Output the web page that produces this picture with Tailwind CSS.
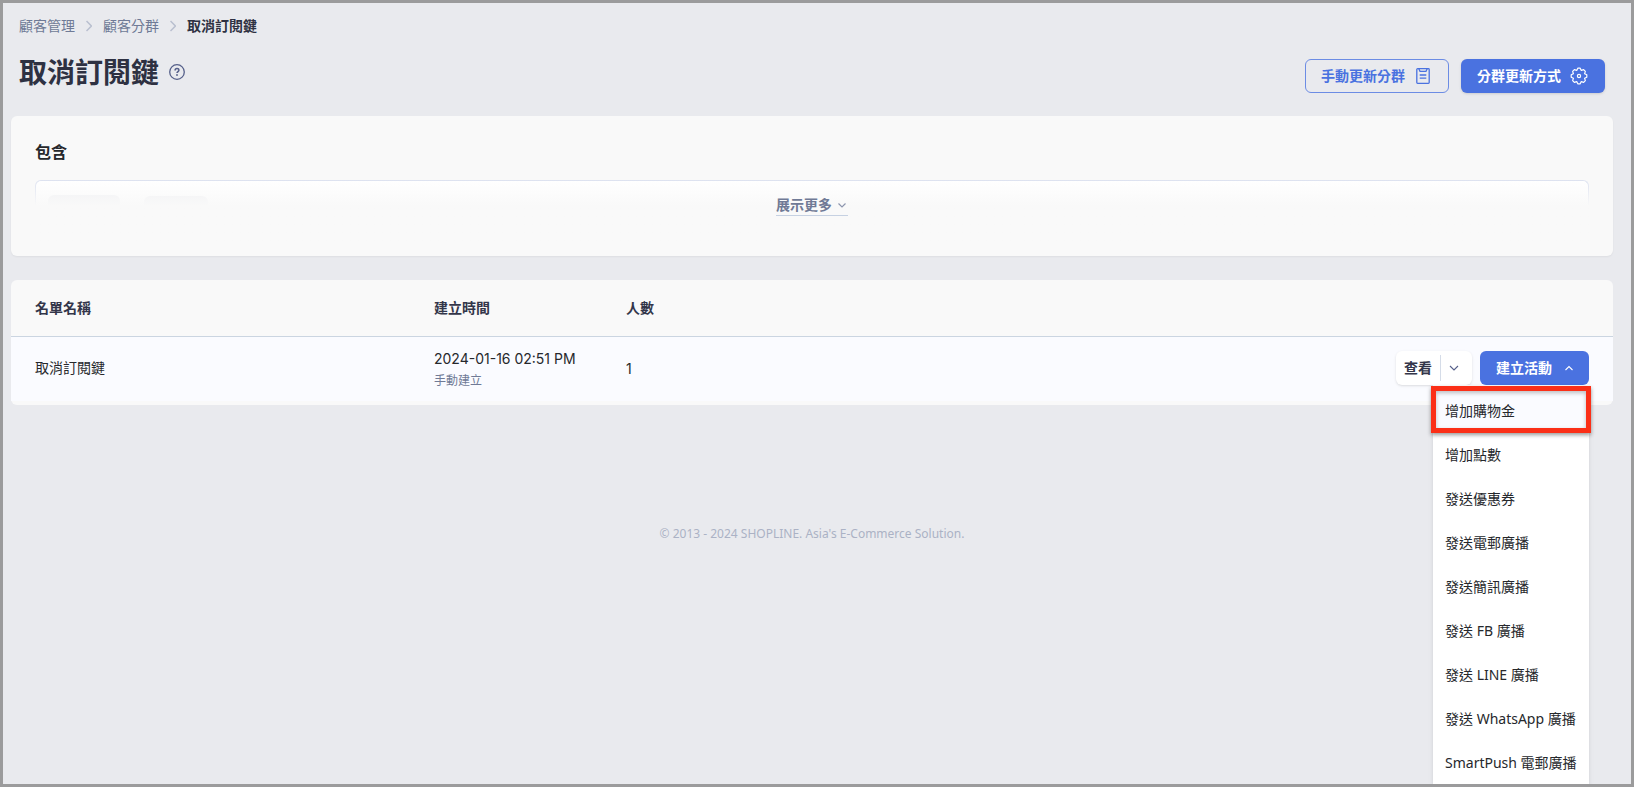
<!DOCTYPE html>
<html lang="zh-Hant">
<head>
  <meta charset="UTF-8" />
  <meta name="viewport" content="width=device-width, initial-scale=1" />
  <title>取消訂閱鍵</title>
  <script src="https://cdn.jsdelivr.net/npm/@tailwindcss/browser@4"></script>
</head>
<body class="font-['Noto_Sans','Noto_Sans_CJK_TC',sans-serif] text-sm text-[#26282c]">
  <div class="h-screen overflow-hidden border-3 border-[#9b9b9c] bg-[#e9eaee] pl-2 pr-[18px] pt-[13px]">

    <!-- Breadcrumb -->
    <nav aria-label="breadcrumb" class="flex items-center px-2 leading-5 text-[#6f7a96]">
      <a href="#">顧客管理</a>
      <svg class="mx-[11px] h-3 w-1.5" viewBox="0 0 6 12" fill="none" stroke="#b9bfcf" stroke-width="1.5"><path d="M.5 1 5.4 6 .5 11" /></svg>
      <a href="#">顧客分群</a>
      <svg class="mx-[11px] h-3 w-1.5" viewBox="0 0 6 12" fill="none" stroke="#b9bfcf" stroke-width="1.5"><path d="M.5 1 5.4 6 .5 11" /></svg>
      <span class="font-bold text-[#2e3142]">取消訂閱鍵</span>
    </nav>

    <!-- Header -->
    <header class="mt-[23px] flex items-start justify-between px-2">
      <div class="flex items-center gap-2.5">
        <h1 class="text-[28px] leading-[26px] font-bold text-[#2e3142]">取消訂閱鍵</h1>
        <button type="button" aria-label="說明">
          <svg class="block size-4" viewBox="0 0 16 16" fill="none" stroke="#56608a" stroke-width="1.3">
            <circle cx="8" cy="8" r="7.3" />
            <path d="M6.1 6.4c0-1.2.8-1.9 1.9-1.9s1.9.7 1.9 1.7c0 1.3-1.9 1.5-1.9 2.9" stroke-width="1.5" />
            <circle cx="8" cy="11" r=".9" fill="#56608a" stroke="none" />
          </svg>
        </button>
      </div>
      <div class="flex gap-3">
        <button type="button" class="flex h-[34px] w-36 items-center justify-between rounded-md border border-[#6c8ce4] pl-[15px] pr-[18px] font-bold text-[#4a72e0]">
          手動更新分群
          <svg class="h-4 w-[14px]" viewBox="0 0 14 16" fill="none" stroke="#4a72e0" stroke-width="1.3">
            <rect x=".8" y=".7" width="12.4" height="14.6" rx=".8" />
            <path d="M2.8.8 4 3.300h6L11.200.8M3.700 7h6.600M3.700 10.200h6.600" />
          </svg>
        </button>
        <button type="button" class="flex h-[34px] w-36 items-center justify-between rounded-md bg-[#4a72e0] px-4 font-bold text-white shadow-sm">
          分群更新方式
          <svg class="mr-px size-[18px]" viewBox="0 0 18 18" fill="none" stroke="#fff" stroke-width="1.2" stroke-linejoin="round">
            <path d="M6.7 3.4 7.8 1.2h2.4l1.1 2.2 2.35-.75 1.7 1.7-.75 2.35 2.2 1.1v2.4l-2.2 1.1.75 2.35-1.7 1.7-2.35-.75-1.1 2.2H7.8l-1.1-2.2-2.35.75-1.7-1.7.75-2.35-2.2-1.1V7.8l2.2-1.1-.75-2.35 1.7-1.7z" />
            <circle cx="9" cy="9" r="1.6" />
          </svg>
        </button>
      </div>
    </header>

    <!-- Conditions -->
    <section class="mt-[23px] h-[140px] rounded-md bg-[#f9f9f9] px-6 pt-6 shadow-xs">
      <h2 class="text-base leading-6 font-bold">包含</h2>
      <div class="relative mt-4 h-16">
        <div class="flex h-[25px] gap-6 overflow-hidden rounded-t-md border border-b-0 border-[#dde2f0] bg-white pl-3 pt-3.5">
          <span class="h-8 w-[72px] rounded-md bg-[#eff0f3]"></span>
          <span class="mt-px h-8 w-16 rounded-md bg-[#eff0f3]"></span>
        </div>
        <div class="absolute inset-0 flex items-start justify-center bg-linear-to-b from-[#f9f9f9]/0 to-[#f9f9f9] to-40% pt-[15px]">
          <button type="button" class="flex items-center gap-1.5 border-b border-[#c6d1e2] leading-5 font-bold text-[#707a96]">
            展示更多
            <svg class="mr-0.5 h-2 w-2" viewBox="0 0 8 8" fill="none" stroke="#8d96ae" stroke-width="1.2"><path d="m.5 2.5 3.5 3.5 3.5-3.5" /></svg>
          </button>
        </div>
      </div>
    </section>

    <!-- List -->
    <section class="mt-6 rounded-md bg-[#f9f9f9] pb-1">
      <table class="w-full table-fixed border-collapse text-left">
        <thead>
          <tr class="h-14 border-b border-[#cbd5e1] text-[#33364a]">
            <th class="w-[423px] pl-6 font-bold">名單名稱</th>
            <th class="w-48 font-bold">建立時間</th>
            <th class="font-bold">人數</th>
            <th class="w-[260px]"></th>
          </tr>
        </thead>
        <tbody>
          <tr class="h-[65px] bg-[#fafbff]">
            <td class="pb-0.5 pl-6">取消訂閱鍵</td>
            <td class="pt-1 font-['Inter','Noto_Sans_CJK_TC',sans-serif]">
              <p class="leading-5">2024-01-16 02:51 PM</p>
              <p class="text-xs leading-6 text-[#6f7a96]">手動建立</p>
            </td>
            <td class="font-['Inter',sans-serif]">1</td>
            <td class="pr-6 pb-0.5">
              <div class="flex justify-end gap-2">
                <div class="flex h-[34px] items-center rounded-md bg-white shadow-sm">
                  <button type="button" class="w-11 font-bold text-[#33364a]">查看</button>
                  <button type="button" aria-label="更多" class="flex h-[26px] w-8 items-center border-l border-[#d5dce8] pl-2">
                    <svg class="h-2.5 w-2.5" viewBox="0 0 10 10" fill="none" stroke="#56608a" stroke-width="1.1"><path d="m1 3 4 4 4-4" /></svg>
                  </button>
                </div>
                <div class="relative">
                  <button type="button" aria-expanded="true" class="flex h-[34px] w-[109px] items-center justify-between rounded-md bg-[#4a72e0] px-4 font-bold text-white">
                    建立活動
                    <svg class="h-2.5 w-2" viewBox="0 0 8 10" fill="none" stroke="#fff" stroke-width="1.1"><path d="m.5 7 3.5-3.5L7.5 7" /></svg>
                  </button>

                  <!-- Dropdown -->
                  <ul class="absolute right-0 top-full z-10 w-[156px] bg-white pt-1 whitespace-nowrap shadow-md">
                    <li class="relative bg-[#fafbff]">
                      <a href="#" class="block px-3 leading-11">增加購物金</a>
                      <span class="pointer-events-none absolute -inset-x-0.5 -top-[3px] bottom-0 border-5 border-[#fb2f17] shadow-[0_2px_4px_rgba(0,0,0,0.4),inset_0_2px_4px_rgba(0,0,0,0.25)]"></span>
                    </li>
                    <li><a href="#" class="block px-3 leading-11">增加點數</a></li>
                    <li><a href="#" class="block px-3 leading-11">發送優惠券</a></li>
                    <li><a href="#" class="block px-3 leading-11">發送電郵廣播</a></li>
                    <li><a href="#" class="block px-3 leading-11">發送簡訊廣播</a></li>
                    <li><a href="#" class="block px-3 leading-11">發送 FB 廣播</a></li>
                    <li><a href="#" class="block px-3 leading-11">發送 LINE 廣播</a></li>
                    <li><a href="#" class="block px-3 leading-11">發送 WhatsApp 廣播</a></li>
                    <li><a href="#" class="block px-3 leading-11">SmartPush 電郵廣播</a></li>
                  </ul>
                </div>
              </div>
            </td>
          </tr>
        </tbody>
      </table>
    </section>

    <footer class="mt-[119px] text-center text-xs leading-5 text-[#abb2c5]">© 2013 - 2024 SHOPLINE. Asia's E-Commerce Solution.</footer>
  </div>
</body>
</html>
